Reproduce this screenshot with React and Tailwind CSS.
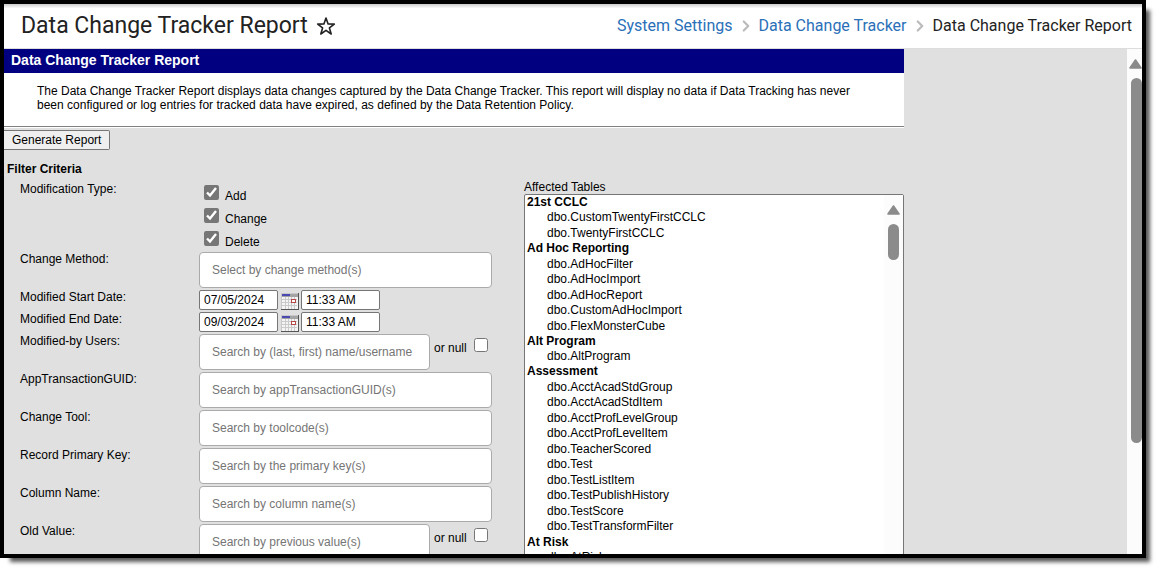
import { ChevronRight } from 'lucide-react';

const GROUPS = [
  { name: '21st CCLC', tables: ['CustomTwentyFirstCCLC', 'TwentyFirstCCLC'] },
  { name: 'Ad Hoc Reporting', tables: ['AdHocFilter', 'AdHocImport', 'AdHocReport', 'CustomAdHocImport', 'FlexMonsterCube'] },
  { name: 'Alt Program', tables: ['AltProgram'] },
  {
    name: 'Assessment',
    tables: [
      'AcctAcadStdGroup', 'AcctAcadStdItem', 'AcctProfLevelGroup', 'AcctProfLevelItem', 'TeacherScored',
      'Test', 'TestListItem', 'TestPublishHistory', 'TestScore', 'TestTransformFilter',
    ],
  },
  { name: 'At Risk', tables: ['AtRisk'] },
];

function StarIcon() {
  return (
    <svg viewBox="0 0 20 20" className="size-5" fill="none" stroke="#222" strokeWidth="1.6" strokeLinejoin="round" aria-hidden="true">
      <path d="M10 2 12.100 7.900 18.300 8.100 13.400 11.900 15.200 18 10 14.400 4.800 18 6.600 11.900 1.700 8.100 7.900 7.900Z" />
    </svg>
  );
}

function CalendarIcon() {
  return (
    <svg viewBox="0 0 18 17" className="h-[17px] w-[18px]" shapeRendering="crispEdges" aria-hidden="true">
      <rect width="18" height="17" fill="#c8c8c8" />
      <rect x="1" y="1" width="16" height="3" fill="#a4a4a4" />
      <rect x="1" y="1" width="8" height="2" fill="#4a4ab0" />
      <rect x="1" y="4" width="16" height="12" fill="#f4f4f4" />
      <path d="M4.5 4v12M7.5 4v12M10.5 4v12M13.5 4v12M1 6.5h15M1 9.5h15M1 12.5h15" stroke="#cacaca" fill="none" />
      <rect x="10.5" y="6.5" width="4" height="3" fill="#fff" stroke="#b84848" />
      <path d="M17.5 0v17M0 16.5h18" stroke="#555" fill="none" />
    </svg>
  );
}

function ArrowUp() {
  return (
    <svg viewBox="0 0 13 10" className="h-[10px] w-[13px] shrink-0" aria-hidden="true">
      <path d="M6.5 1 12 9H1Z" fill="#8b8b8b" stroke="#8b8b8b" strokeWidth="1.6" strokeLinejoin="round" />
    </svg>
  );
}

function Row({ id, label, children }) {
  return (
    <div className="flex items-start">
      <label htmlFor={id} className="w-[179px] shrink-0">{label}</label>
      {children}
    </div>
  );
}

function SearchRow({ id, label, placeholder, nullable }) {
  return (
    <Row id={id} label={label}>
      <input
        id={id}
        type="text"
        placeholder={placeholder}
        className={`h-9 rounded border border-[#aaa] bg-white px-3 placeholder:text-[#757575] ${nullable ? 'w-[231px]' : 'w-[293px]'}`}
      />
      {nullable && (
        <label className="flex items-start gap-[7px] pl-1">
          <span className="pt-[7px]">or null</span>
          <input type="checkbox" className="mt-1 size-[14px]" />
        </label>
      )}
    </Row>
  );
}

function DateRow({ id, label, date }) {
  return (
    <Row id={id} label={label}>
      <div className="flex items-center gap-[2px]">
        <input id={id} type="text" defaultValue={date} className="h-5 w-[79px] rounded-xs border border-[#767676] bg-white px-1" />
        <button type="button" aria-label={`Pick ${label}`} className="pt-[3px] pl-px"><CalendarIcon /></button>
        <input type="text" aria-label={`${label} time`} defaultValue="11:33 AM" className="h-5 w-[79px] rounded-xs border border-[#767676] bg-white px-1" />
      </div>
    </Row>
  );
}

function TableList() {
  let row = 0;
  return (
    <div className="flex h-[600px] rounded-t-xs border border-[#767676] bg-white">
      <select id="tables" multiple className="min-w-0 flex-1 overflow-hidden">
        {GROUPS.map((group) => {
          row += 1;
          return (
            <optgroup key={group.name} label={group.name} className="font-bold">
              {group.tables.map((table) => {
                row += 1;
                return (
                  <option key={table} className={`p-0 pl-[22px] font-normal ${row % 2 ? 'h-[15px]' : 'h-4'}`}>
                    {`dbo.${table}`}
                  </option>
                );
              })}
            </optgroup>
          );
        })}
      </select>
      <div className="flex w-[19px] flex-col items-center gap-[9px] bg-[#fcfcfc] pt-[10px]">
        <ArrowUp />
        <div className="h-9 w-[11px] rounded-full bg-[#8b8b8b]" />
      </div>
    </div>
  );
}

export default function App() {
  return (
    <div className="h-screen bg-white pr-[15px] pb-[15px] font-['Liberation_Sans',Arial,sans-serif] text-[12px] leading-[14px] text-black">
      <div className="flex h-full flex-col overflow-hidden border-4 border-black bg-white shadow-[7px_7px_4px_-3px_rgba(0,0,0,0.65)]">
        <header className="flex h-[45px] shrink-0 items-center justify-between border-b border-[#ddd] bg-linear-to-b from-[#ccc] to-white to-10% pr-[10px] pl-[17px] font-[Roboto,sans-serif] text-[#222]">
          <div className="flex items-center gap-2">
            <h1 className="text-[23px] leading-7">Data Change Tracker Report</h1>
            <button type="button" aria-label="Add to favorites"><StarIcon /></button>
          </div>
          <nav aria-label="Breadcrumb" className="flex items-center gap-1 text-[16px] leading-5">
            <a href="#settings" className="text-[#2a70b8]">System Settings</a>
            <ChevronRight className="size-[18px] text-[#bbb]" strokeWidth={3} />
            <a href="#tracker" className="text-[#2a70b8]">Data Change Tracker</a>
            <ChevronRight className="size-[18px] text-[#bbb]" strokeWidth={3} />
            <span>Data Change Tracker Report</span>
          </nav>
        </header>
        <div className="flex min-h-0 flex-1 bg-[#e0e0e0]">
          <main className="min-w-0 flex-1 overflow-hidden">
            <section className="max-w-[900px] border-b border-[#808080] bg-white shadow-[0_1px_0_#fff]">
              <h2 className="bg-[#000080] px-[7px] pt-[3px] pb-[5px] text-[14px] leading-4 font-bold text-white">Data Change Tracker Report</h2>
              <p className="px-[33px] pt-[11px] pb-[14px]">
                The Data Change Tracker Report displays data changes captured by the Data Change Tracker. This report will display no data if Data Tracking has never been configured or log entries for tracked data have expired, as defined by the Data Retention Policy.
              </p>
            </section>
            <form className="max-w-[900px] pt-[3px]">
              <button type="button" className="block h-5 rounded-r-xs border border-l-0 border-[#767676] bg-[#efefef] px-2">Generate Report</button>
              <h3 className="px-[3px] pt-3 font-bold">Filter Criteria</h3>
              <div className="flex items-start pt-1 pl-4">
                <div className="flex w-[504px] shrink-0 flex-col gap-[2px]">
                  <fieldset className="flex items-start pb-px">
                    <legend className="float-left w-[179px] pt-[2px]">Modification Type:</legend>
                    <div>
                      {['Add', 'Change', 'Delete'].map((type) => (
                        <label key={type} className="flex h-[23px] items-start gap-[6px] pt-[5px] pl-[5px]">
                          <input type="checkbox" defaultChecked className="size-[15px] accent-[#767676]" />
                          <span className="pt-1">{type}</span>
                        </label>
                      ))}
                    </div>
                  </fieldset>
                  <SearchRow id="method" label="Change Method:" placeholder="Select by change method(s)" />
                  <DateRow id="start" label="Modified Start Date:" date="07/05/2024" />
                  <DateRow id="end" label="Modified End Date:" date="09/03/2024" />
                  <SearchRow id="users" label="Modified-by Users:" placeholder="Search by (last, first) name/username" nullable />
                  <SearchRow id="guid" label="AppTransactionGUID:" placeholder="Search by appTransactionGUID(s)" />
                  <SearchRow id="tool" label="Change Tool:" placeholder="Search by toolcode(s)" />
                  <SearchRow id="key" label="Record Primary Key:" placeholder="Search by the primary key(s)" />
                  <SearchRow id="column" label="Column Name:" placeholder="Search by column name(s)" />
                  <SearchRow id="old" label="Old Value:" placeholder="Search by previous value(s)" nullable />
                </div>
                <div className="min-w-0 flex-1">
                  <label htmlFor="tables" className="block">Affected Tables</label>
                  <TableList />
                </div>
              </div>
            </form>
          </main>
          <div className="flex w-[15px] shrink-0 flex-col items-end gap-[9px] bg-[#fcfcfc] pt-[10px]" aria-hidden="true">
            <ArrowUp />
            <div className="h-[365px] w-[11px] rounded-full bg-[#8b8b8b]" />
          </div>
        </div>
      </div>
    </div>
  );
}
